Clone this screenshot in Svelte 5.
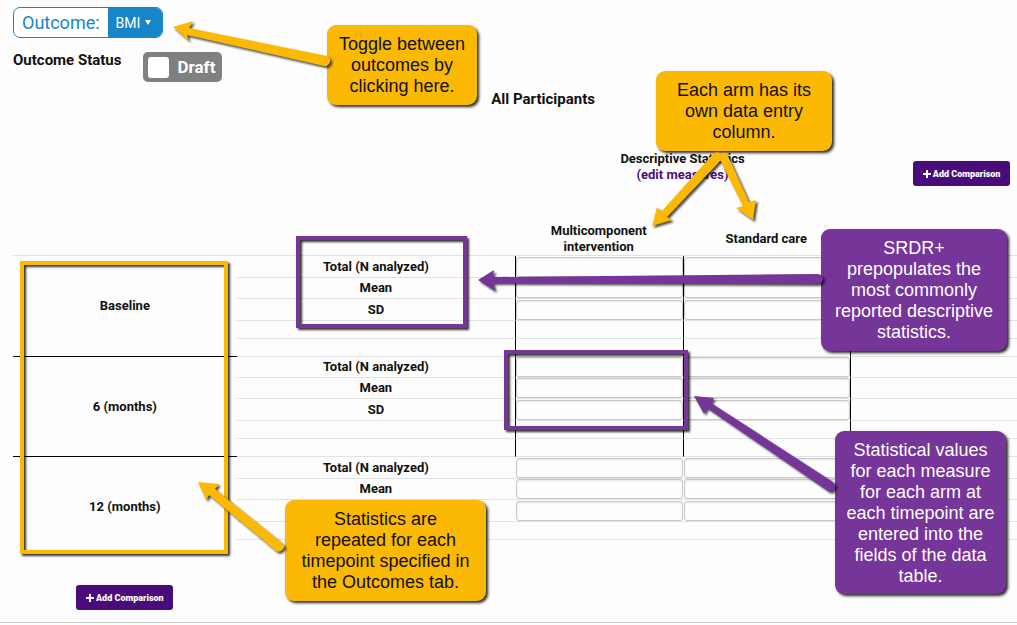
<script>
  const arms = ['Multicomponent intervention', 'Standard care'];
  const timepoints = ['Baseline', '6 (months)', '12 (months)'];
  const measures = ['Total (N analyzed)', 'Mean', 'SD'];
  let draft = $state(false);
  let outcome = $state('BMI');
</script>

{#snippet addButton()}
  <button type="button" class="add">
    <svg width="8" height="8" viewBox="0 0 8 8" aria-hidden="true"><path d="M3 0h2v3h3v2H5v3H3V5H0V3h3z" fill="currentColor" /></svg>
    Add Comparison
  </button>
{/snippet}

<main>
  <header>
    <div class="outcome">
      <label for="outcome">Outcome:</label>
      <div class="picker">
        <select id="outcome" bind:value={outcome}>
          <option>BMI</option>
        </select>
        <svg width="6" height="5" viewBox="0 0 6 5" aria-hidden="true"><path d="M0 0h6L3 5z" fill="#fff" /></svg>
      </div>
    </div>
    <div class="status">
      <span class="status-name">Outcome Status</span>
      <label class="toggle"><input type="checkbox" bind:checked={draft} />Draft</label>
    </div>
  </header>

  <div class="scroller">
    <table>
      <colgroup>
        <col class="c-time" />
        <col class="c-measure" />
        <col class="c-arm" />
        <col class="c-arm" />
        <col />
      </colgroup>
      <thead>
        <tr class="population"><th colspan="5">All Participants</th></tr>
        <tr class="section">
          <td colspan="2"></td>
          <th colspan="2">Descriptive Statistics<br /><a href="#measures">(edit measures)</a></th>
          <td class="compare">{@render addButton()}</td>
        </tr>
        <tr class="arms">
          <td></td>
          <td></td>
          {#each arms as arm}<th scope="col"><span>{arm}</span></th>{/each}
          <td></td>
        </tr>
      </thead>
      {#each timepoints as time}
        <tbody>
          {#each measures as measure, i}
            <tr>
              {#if i === 0}<th class="time" rowspan="5" scope="rowgroup">{time}</th>{/if}
              <th scope="row">{measure}</th>
              {#each arms as arm}
                <td class="arm"><input type="text" aria-label="{time}, {measure}, {arm}" /></td>
              {/each}
              <td class="arm"></td>
            </tr>
          {/each}
          {#each [0, 1] as _}
            <tr class="spacer">
              <td></td>
              <td class="arm"></td>
              <td class="arm"></td>
              <td class="arm"></td>
            </tr>
          {/each}
        </tbody>
      {/each}
      <tfoot>
        <tr>
          <td>{@render addButton()}</td>
          <td colspan="4"></td>
        </tr>
      </tfoot>
    </table>
  </div>

  <div class="frame yellow timepoints"></div>
  <div class="frame purple measures"></div>
  <div class="frame purple values"></div>

  <p class="note yellow n-toggle">Toggle between outcomes by clicking here.</p>
  <p class="note yellow n-arm">Each arm has its own data entry column.</p>
  <p class="note purple n-measures">SRDR+ prepopulates the most commonly reported descriptive statistics.</p>
  <p class="note purple n-values">Statistical values for each measure for each arm at each timepoint are entered into the fields of the data table.</p>
  <p class="note yellow n-time">Statistics are repeated for each timepoint specified in the Outcomes tab.</p>

  <svg class="arrows" width="1017" height="625" viewBox="0 0 1017 625" aria-hidden="true">
    <g fill="#fbb903">
      <path d="M173 27 193 21 189 28 327 56Q331 58 330 62 328 67 324 66L187 35 189 41Z" />
      <path d="M652 226 657 207 661 212 713 154Q716 151 720 153 724 156 721 160L667 217 672 220Z" />
      <path d="M753 220 736 208 743 206 719 158Q718 154 722 153 726 152 728 156L749 202 756 200Z" />
      <path d="M198 482 219 484 215 489 282 543Q286 546 283 549 280 553 276 551L209 495 206 500Z" />
    </g>
    <g fill="#763598">
      <path d="M478 280 494 270 493 277 818 274Q823 275 823 279 822 284 818 284L493 283 495 291Z" />
      <path d="M694 396 714 398 711 403 833 482Q837 485 834 489 832 493 828 491L707 408 704 414Z" />
    </g>
  </svg>
</main>

<style>
  :global(body) {
    background: #fdfdfd;
    color: #111;
    font-family: Roboto, sans-serif;
    overflow: hidden;
  }
  main {
    position: relative;
    padding: 7px 0 0 13px;
    border-bottom: 1px solid #ccc;
  }
  .outcome {
    display: inline-flex;
    vertical-align: top;
    height: 31px;
    box-sizing: border-box;
    border: 1px solid #1785c9;
    border-radius: 7px;
    overflow: hidden;
    background: #fff;
  }
  .outcome label {
    padding: 0 8px;
    font-size: 18px;
    line-height: 29px;
    color: #1785c9;
  }
  .picker {
    display: grid;
    align-items: center;
    background: #1785c9;
  }
  .picker > * { grid-area: 1 / 1; }
  .picker svg { justify-self: end; margin-right: 11px; pointer-events: none; }
  select {
    appearance: none;
    width: 54px;
    height: 29px;
    padding: 0 8px;
    border: 0;
    background: none;
    color: #fff;
    font: 14px Roboto, sans-serif;
  }
  .status {
    display: flex;
    gap: 22px;
    align-items: flex-start;
    margin-top: 14px;
    height: 36px;
  }
  .status-name {
    font-size: 15px;
    font-weight: 700;
    line-height: 16px;
  }
  .toggle {
    display: flex;
    align-items: center;
    gap: 8px;
    height: 30px;
    box-sizing: border-box;
    padding: 0 7px 0 5px;
    border-radius: 5px;
    background: #808080;
    color: #fff;
    font-size: 17px;
    line-height: 28px;
    font-weight: 700;
  }
  .toggle input {
    appearance: none;
    width: 21px;
    height: 21px;
    margin: 0;
    border-radius: 3px;
    background: #fff;
  }
  .toggle input:checked { background: #1785c9; }
  .scroller { overflow: hidden; }
  table {
    table-layout: fixed;
    width: 105.6%;
    border-collapse: separate;
    border-spacing: 0;
    font-size: 13px;
    line-height: 16px;
    text-align: center;
  }
  .c-time { width: 21.1%; }
  .c-measure { width: 26.25%; }
  .c-arm { width: 15.8%; }
  th, td {
    box-sizing: border-box;
    padding: 0;
    font-weight: 700;
  }
  .population th { height: 22px; font-size: 15px; }
  .section > * { height: 112px; }
  .section th { padding-top: 2px; }
  .section .compare { padding-top: 15px; }
  .arms > * { height: 34px; border-bottom: 1px solid #e2e2e2; }
  .arms span { display: block; padding: 0 30px; }
  a { color: #4b0c7b; text-decoration: none; }
  tbody th, tbody td {
    height: 22px;
    border-bottom: 1px solid #e2e2e2;
  }
  tbody tr:nth-child(2) > *,
  tbody:nth-of-type(2) tr:first-child > * { height: 21px; }
  tbody .spacer td { height: 18px; }
  tbody .time {
    border-bottom-color: #000;
  }
  .arm { border-left: 1px solid #000; }
  tbody:last-of-type .arm { border-left-color: #fdfdfd; }
  tbody:last-of-type .time,
  tbody:last-of-type .spacer:last-child td { border-bottom-color: transparent; }
  .arm input {
    display: block;
    box-sizing: border-box;
    width: 100%;
    height: 20px;
    border: 1px solid #c8c8c8;
    border-radius: 3px;
    background: #fefefe;
    box-shadow: inset 0 1px 2px rgba(0, 0, 0, 0.1);
    font: 13px Roboto, sans-serif;
  }
  tfoot td { padding: 27px 0 12px; }
  .add {
    display: inline-flex;
    vertical-align: top;
    align-items: center;
    justify-content: center;
    gap: 2px;
    width: 97px;
    height: 25px;
    padding: 0;
    border: 0;
    border-radius: 3px;
    background: #4b0c7b;
    color: #fff;
    font: 900 9px Roboto, sans-serif;
  }
  .frame {
    position: absolute;
    box-sizing: border-box;
    border: 4px solid;
    filter: drop-shadow(2px 2px 1px rgba(0, 0, 0, 0.8));
  }
  .frame.yellow { border-color: #fbb903; }
  .frame.purple { border-color: #763598; }
  .timepoints { left: 20px; top: 261px; width: 208px; height: 293px; }
  .measures { left: 296px; top: 236px; width: 171px; height: 92px; }
  .values { left: 504px; top: 350px; width: 184px; height: 80px; }
  .note {
    position: absolute;
    display: flex;
    align-items: center;
    justify-content: center;
    box-sizing: border-box;
    margin: 0;
    padding: 1px 11px 0;
    border-radius: 9px;
    box-shadow: 2px 2px 3px rgba(0, 0, 0, 0.85);
    font: 18px/21px "Liberation Sans", Arial, sans-serif;
    text-align: center;
  }
  .note.yellow { background: #fbb903; color: #111; }
  .note.purple { background: #763598; color: #fff; }
  .n-toggle { left: 327px; top: 25px; width: 150px; height: 80px; }
  .n-arm { left: 656px; top: 71px; width: 176px; height: 80px; }
  .n-measures { left: 821px; top: 229px; width: 186px; height: 122px; }
  .n-values { left: 835px; top: 431px; width: 171px; height: 163px; }
  .n-time { left: 285px; top: 500px; width: 201px; height: 101px; }
  .arrows {
    position: absolute;
    left: 0;
    top: 0;
    pointer-events: none;
  }
  .arrows g { filter: drop-shadow(2px 2px 1px rgba(0, 0, 0, 0.7)); }
</style>
